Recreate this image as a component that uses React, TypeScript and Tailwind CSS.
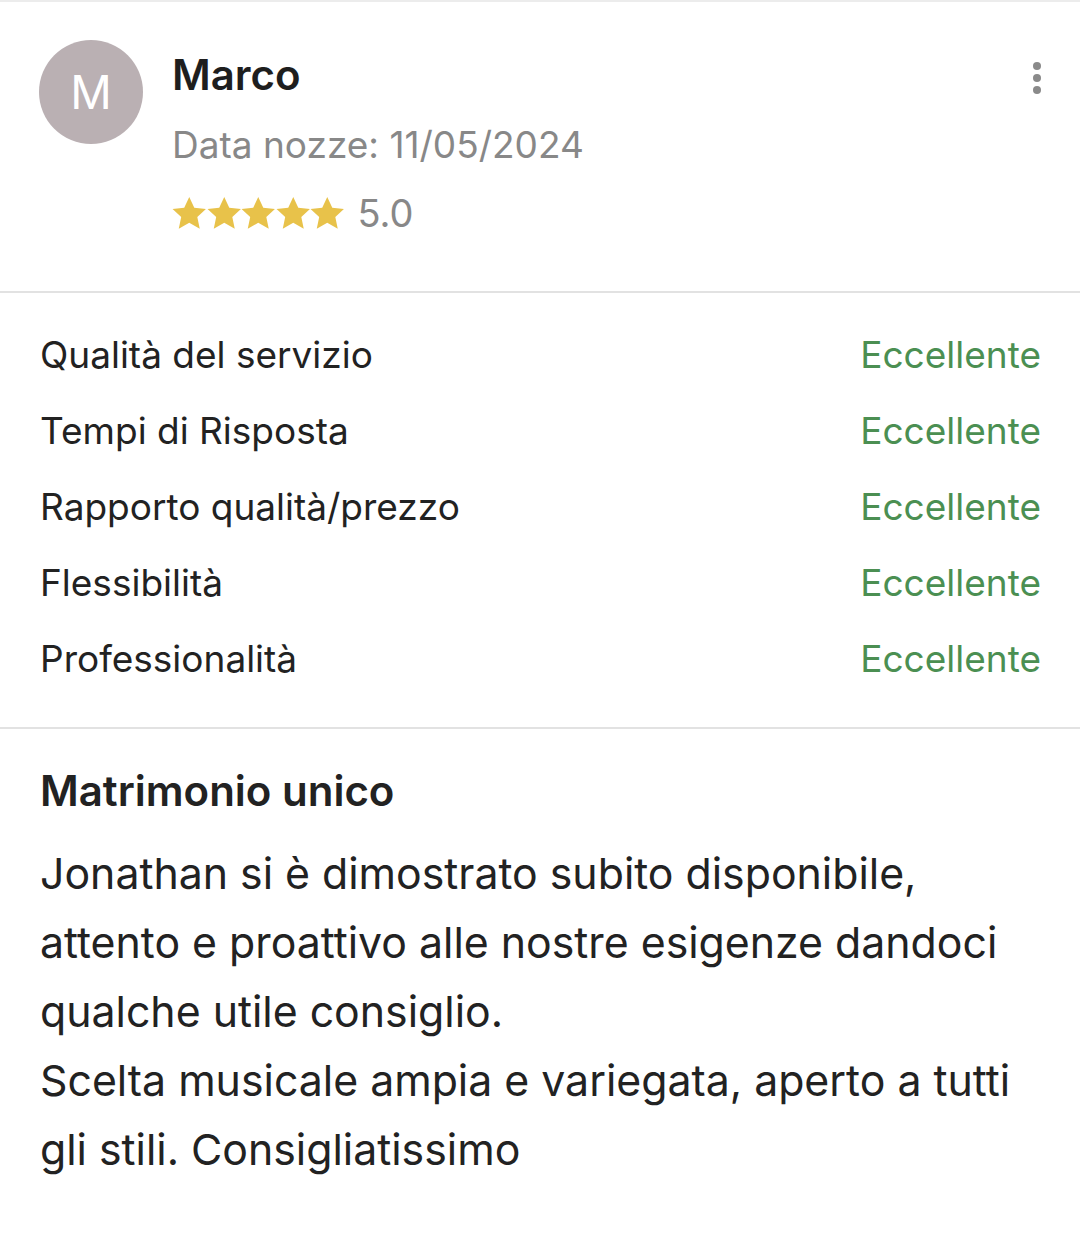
import React from 'react';

const ratings = [
  'Qualità del servizio',
  'Tempi di Risposta',
  'Rapporto qualità/prezzo',
  'Flessibilità',
  'Professionalità',
];

const Star = () => (
  <svg viewBox="0 0 24 24" className="h-[35px] w-[34.5px]">
    <path
      d="M12 0.6l3.5 7.4 8.1.9-6 5.6 1.7 8.1L12 18.5l-7.3 4.1 1.7-8.1-6-5.6 8.1-.9z"
      fill="#e8c24a"
    />
  </svg>
);

export default function App() {
  return (
    <div className="w-[1080px] h-[1260px] bg-white font-['Inter',sans-serif] text-[#222]">
      <div className="border-t-2 border-[#ececec]" />

      {/* Header */}
      <div className="flex pl-[39px] pr-[39px] pt-[38px] pb-[58px] border-b-2 border-[#e2e2e2]">
        <div className="w-[104px] h-[104px] rounded-full bg-[#bab0b3] flex items-center justify-center text-white text-[46px] shrink-0">
          M
        </div>
        <div className="ml-[29px] flex-1">
          <div className="text-[42px] font-semibold leading-[48px] mt-[11px] text-[#1e1e1e]">Marco</div>
          <div className="text-[37px] leading-[44px] mt-[24px] text-[#888]">Data nozze: 11/05/2024</div>
          <div className="flex items-center mt-[26px]">
            <div className="flex">
              <Star />
              <Star />
              <Star />
              <Star />
              <Star />
            </div>
            <span className="ml-[13px] text-[38px] text-[#888] leading-[40px]">5.0</span>
          </div>
        </div>
        <div className="flex flex-col gap-[4px] pt-[22px]">
          <span className="w-[8px] h-[8px] rounded-full bg-[#8a8a8a]" />
          <span className="w-[8px] h-[8px] rounded-full bg-[#8a8a8a]" />
          <span className="w-[8px] h-[8px] rounded-full bg-[#8a8a8a]" />
        </div>
      </div>

      {/* Ratings */}
      <div className="pl-[40px] pr-[39px] pt-[24px] pb-[30px] border-b-2 border-[#e2e2e2]">
        {ratings.map((r) => (
          <div key={r} className="flex justify-between items-center h-[76px] text-[37px]">
            <span className="text-[#222]">{r}</span>
            <span className="text-[#4b8f52]">Eccellente</span>
          </div>
        ))}
      </div>

      {/* Review */}
      <div className="px-[40px] pt-[38px]">
        <div className="text-[42px] font-semibold leading-[48px] text-[#222]">Matrimonio unico</div>
        <p className="mt-[24px] text-[42.8px] leading-[69px] text-[#222]">
          Jonathan si è dimostrato subito disponibile,
          <br />
          attento e proattivo alle nostre esigenze dandoci
          <br />
          qualche utile consiglio.
          <br />
          Scelta musicale ampia e variegata, aperto a tutti
          <br />
          gli stili. Consigliatissimo
        </p>
      </div>
    </div>
  );
}
